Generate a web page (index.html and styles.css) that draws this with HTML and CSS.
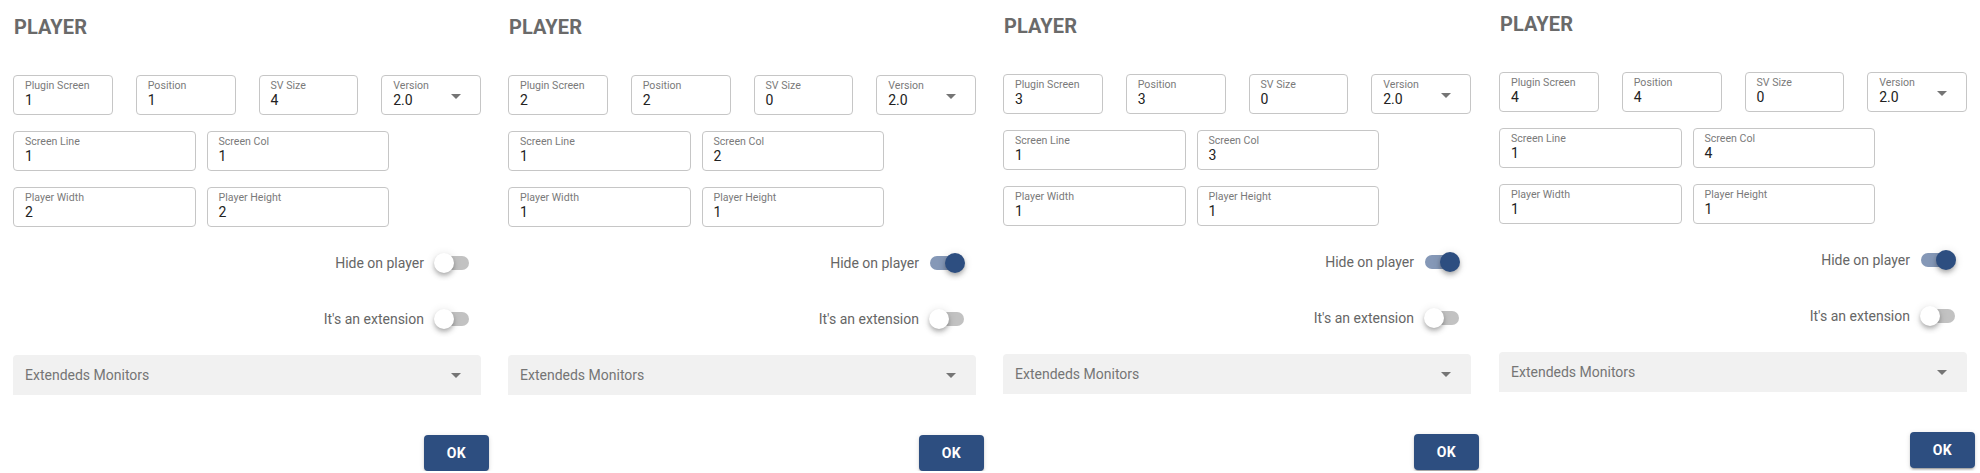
FILE: index.html
```html
<!DOCTYPE html>
<html lang="en">
<head>
<meta charset="utf-8">
<title>Player</title>
<link rel="stylesheet" href="styles.css">
</head>
<body>
<div class="page">

  <section class="panel">
    <h2 class="title">PLAYER</h2>
    <div class="form">
      <div class="row row--four">
        <div class="field"><span class="label">Plugin Screen</span><span class="value">1</span></div>
        <div class="field"><span class="label">Position</span><span class="value">1</span></div>
        <div class="field"><span class="label">SV Size</span><span class="value">4</span></div>
        <div class="field field--select"><span class="label">Version</span><span class="value">2.0</span><span class="caret"></span></div>
      </div>
      <div class="row row--two">
        <div class="field"><span class="label">Screen Line</span><span class="value">1</span></div>
        <div class="field"><span class="label">Screen Col</span><span class="value">1</span></div>
      </div>
      <div class="row row--two">
        <div class="field"><span class="label">Player Width</span><span class="value">2</span></div>
        <div class="field"><span class="label">Player Height</span><span class="value">2</span></div>
      </div>
      <div class="toggle-row"><span class="toggle-label">Hide on player</span><span class="switch"><span class="track"></span><span class="thumb"></span></span></div>
      <div class="toggle-row"><span class="toggle-label">It's an extension</span><span class="switch"><span class="track"></span><span class="thumb"></span></span></div>
      <div class="filled"><span class="filled-label">Extendeds Monitors</span><span class="caret"></span></div>
    </div>
    <div class="actions"><button class="btn">OK</button></div>
  </section>

  <section class="panel">
    <h2 class="title">PLAYER</h2>
    <div class="form">
      <div class="row row--four">
        <div class="field"><span class="label">Plugin Screen</span><span class="value">2</span></div>
        <div class="field"><span class="label">Position</span><span class="value">2</span></div>
        <div class="field"><span class="label">SV Size</span><span class="value">0</span></div>
        <div class="field field--select"><span class="label">Version</span><span class="value">2.0</span><span class="caret"></span></div>
      </div>
      <div class="row row--two">
        <div class="field"><span class="label">Screen Line</span><span class="value">1</span></div>
        <div class="field"><span class="label">Screen Col</span><span class="value">2</span></div>
      </div>
      <div class="row row--two">
        <div class="field"><span class="label">Player Width</span><span class="value">1</span></div>
        <div class="field"><span class="label">Player Height</span><span class="value">1</span></div>
      </div>
      <div class="toggle-row"><span class="toggle-label">Hide on player</span><span class="switch switch--on"><span class="track"></span><span class="thumb"></span></span></div>
      <div class="toggle-row"><span class="toggle-label">It's an extension</span><span class="switch"><span class="track"></span><span class="thumb"></span></span></div>
      <div class="filled"><span class="filled-label">Extendeds Monitors</span><span class="caret"></span></div>
    </div>
    <div class="actions"><button class="btn">OK</button></div>
  </section>

  <section class="panel panel--up1">
    <h2 class="title">PLAYER</h2>
    <div class="form">
      <div class="row row--four">
        <div class="field"><span class="label">Plugin Screen</span><span class="value">3</span></div>
        <div class="field"><span class="label">Position</span><span class="value">3</span></div>
        <div class="field"><span class="label">SV Size</span><span class="value">0</span></div>
        <div class="field field--select"><span class="label">Version</span><span class="value">2.0</span><span class="caret"></span></div>
      </div>
      <div class="row row--two">
        <div class="field"><span class="label">Screen Line</span><span class="value">1</span></div>
        <div class="field"><span class="label">Screen Col</span><span class="value">3</span></div>
      </div>
      <div class="row row--two">
        <div class="field"><span class="label">Player Width</span><span class="value">1</span></div>
        <div class="field"><span class="label">Player Height</span><span class="value">1</span></div>
      </div>
      <div class="toggle-row"><span class="toggle-label">Hide on player</span><span class="switch switch--on"><span class="track"></span><span class="thumb"></span></span></div>
      <div class="toggle-row"><span class="toggle-label">It's an extension</span><span class="switch"><span class="track"></span><span class="thumb"></span></span></div>
      <div class="filled"><span class="filled-label">Extendeds Monitors</span><span class="caret"></span></div>
    </div>
    <div class="actions"><button class="btn">OK</button></div>
  </section>

  <section class="panel panel--up3">
    <h2 class="title">PLAYER</h2>
    <div class="form">
      <div class="row row--four">
        <div class="field"><span class="label">Plugin Screen</span><span class="value">4</span></div>
        <div class="field"><span class="label">Position</span><span class="value">4</span></div>
        <div class="field"><span class="label">SV Size</span><span class="value">0</span></div>
        <div class="field field--select"><span class="label">Version</span><span class="value">2.0</span><span class="caret"></span></div>
      </div>
      <div class="row row--two">
        <div class="field"><span class="label">Screen Line</span><span class="value">1</span></div>
        <div class="field"><span class="label">Screen Col</span><span class="value">4</span></div>
      </div>
      <div class="row row--two">
        <div class="field"><span class="label">Player Width</span><span class="value">1</span></div>
        <div class="field"><span class="label">Player Height</span><span class="value">1</span></div>
      </div>
      <div class="toggle-row"><span class="toggle-label">Hide on player</span><span class="switch switch--on"><span class="track"></span><span class="thumb"></span></span></div>
      <div class="toggle-row"><span class="toggle-label">It's an extension</span><span class="switch"><span class="track"></span><span class="thumb"></span></span></div>
      <div class="filled"><span class="filled-label">Extendeds Monitors</span><span class="caret"></span></div>
    </div>
    <div class="actions"><button class="btn">OK</button></div>
  </section>

</div>
</body>
</html>
```

FILE: styles.css
```css
* { box-sizing: border-box; }

html, body {
  margin: 0;
  padding: 0;
  background: #ffffff;
}

body {
  font-family: Roboto, "Liberation Sans", Arial, sans-serif;
  color: #222222;
}

.page {
  display: flex;
  align-items: flex-start;
}

.panel {
  width: 495px;
  flex: 0 0 495px;
  padding: 15px 14px 0 13px;
}

.panel--up1 { margin-top: -1px; }
.panel--up3 { margin-top: -3px; margin-left: 1px; }

.title {
  margin: 0 0 36px 1px;
  font-size: 20px;
  line-height: 24px;
  font-weight: 700;
  color: #6a6a6a;
  letter-spacing: 0.1px;
}

.form {
  display: flex;
  flex-direction: column;
  gap: 16px;
}

.row {
  display: grid;
  height: 40px;
}

.row--four {
  grid-template-columns: repeat(4, 1fr);
  column-gap: 23px;
}

.row--two {
  grid-template-columns: 1fr 1fr;
  column-gap: 11px;
  width: 376px;
}

.field {
  position: relative;
  height: 40px;
  border: 1px solid #c6c6c6;
  border-radius: 4px;
  padding: 4px 11px 0 11px;
  display: flex;
  flex-direction: column;
}

.label {
  font-size: 10.6px;
  line-height: 12px;
  color: #7a7a7a;
  white-space: nowrap;
}

.value {
  font-size: 14px;
  line-height: 16px;
  color: #222222;
}

.caret {
  width: 0;
  height: 0;
  border-left: 5px solid transparent;
  border-right: 5px solid transparent;
  border-top: 5px solid #757575;
}

.field--select .caret {
  position: absolute;
  right: 19px;
  top: 18px;
}

.toggle-row {
  height: 40px;
  display: flex;
  align-items: center;
  justify-content: flex-end;
  padding-right: 11px;
  gap: 10px;
}

.toggle-label {
  font-size: 14px;
  color: #666666;
}

.switch {
  position: relative;
  width: 36px;
  height: 20px;
  flex: 0 0 36px;
}

.track {
  position: absolute;
  left: 1px;
  top: 3px;
  width: 34px;
  height: 14px;
  border-radius: 7px;
  background: #c2c2c2;
}

.thumb {
  position: absolute;
  left: 0;
  top: 0;
  width: 20px;
  height: 20px;
  border-radius: 50%;
  background: #ffffff;
  box-shadow: 0 2px 4px -1px rgba(0,0,0,0.2), 0 4px 5px 0 rgba(0,0,0,0.14), 0 1px 10px 0 rgba(0,0,0,0.12);
}

.switch--on .track { background: #8598b7; }
.switch--on .thumb {
  left: 16px;
  background: #2d4e80;
}

.filled {
  height: 40px;
  background: #f1f1f1;
  border-radius: 4px 4px 0 0;
  display: flex;
  align-items: center;
  justify-content: space-between;
  padding: 0 20px 0 12px;
}

.filled-label {
  font-size: 14px;
  color: #757575;
}

.actions {
  display: flex;
  justify-content: flex-end;
  margin: 40px -8px 0 0;
}

.btn {
  width: 65px;
  height: 36px;
  border: none;
  border-radius: 4px;
  background: #2d4e80;
  color: #ffffff;
  font-family: Roboto, "Liberation Sans", Arial, sans-serif;
  font-size: 14px;
  font-weight: 700;
  letter-spacing: 0.5px;
  box-shadow: 0 3px 1px -2px rgba(0,0,0,0.2), 0 2px 2px 0 rgba(0,0,0,0.14), 0 1px 5px 0 rgba(0,0,0,0.12);
  padding: 0;
}
```
